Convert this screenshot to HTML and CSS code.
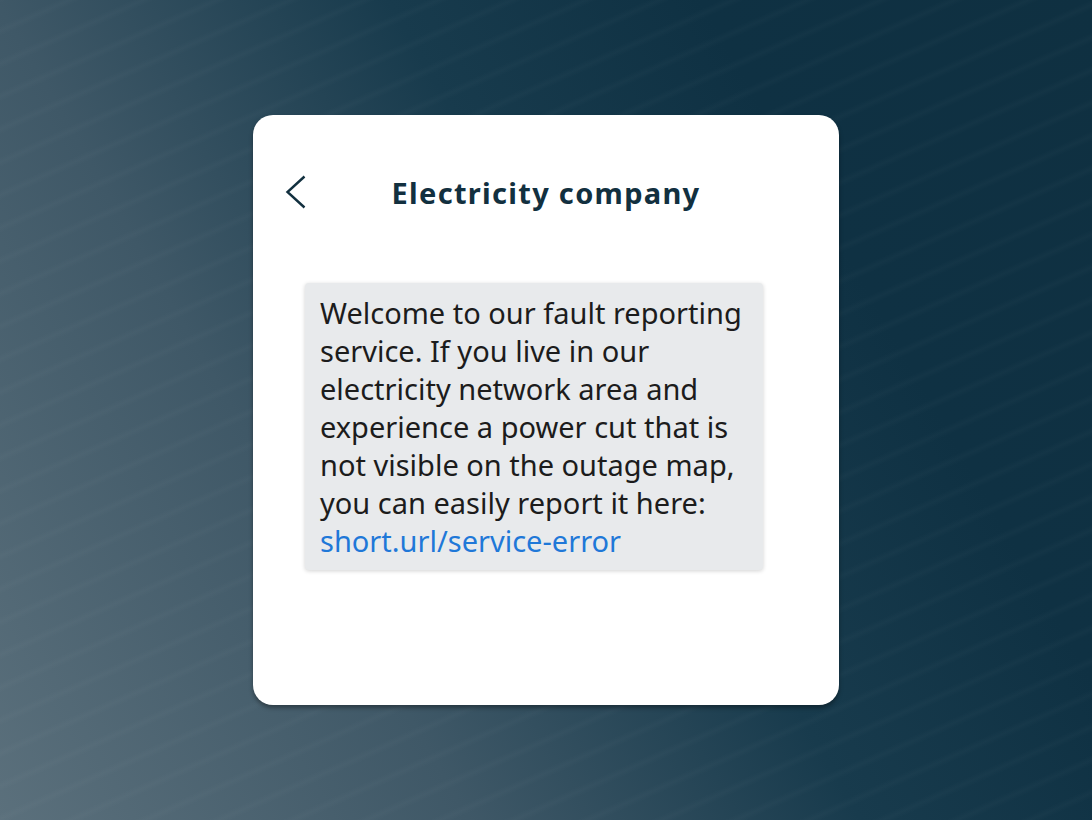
FILE: index.html
```html
<!DOCTYPE html>
<html lang="en">
<head>
<meta charset="utf-8">
<title>Electricity company</title>
<link rel="stylesheet" href="styles.css">
</head>
<body>
<main class="stage">
  <section class="card">
    <header class="card-header">
      <span class="back" aria-label="Back">
        <svg width="22" height="34" viewBox="0 0 22 34" fill="none"><polyline points="19.5,1.5 2.5,17 19.5,32.5" stroke="#12303f" stroke-width="2.4" stroke-linecap="butt" stroke-linejoin="miter"/></svg>
      </span>
      <h1 class="title">Electricity company</h1>
      <span class="spacer"></span>
    </header>
    <div class="thread">
      <p class="bubble">Welcome to our fault reporting service. If you live in our electricity network area and experience a power cut that is not visible on the outage map, you can easily report it here: <a class="link" href="#">short.url/service-error</a></p>
    </div>
  </section>
</main>
</body>
</html>
```
FILE: styles.css
```css
html, body {
  margin: 0;
  padding: 0;
}
body {
  width: 1092px;
  height: 820px;
  overflow: hidden;
  font-family: "Noto Sans", "Open Sans", sans-serif;
  background:
    repeating-linear-gradient(-24deg, rgba(255,255,255,0) 0px, rgba(255,255,255,0) 20px, rgba(255,255,255,0.02) 25px, rgba(255,255,255,0) 30px),
    linear-gradient(60deg, #5b707c 0%, #3f5867 30%, #183b4d 55%, #0f3143 75%, #0f3041 100%);
}
.stage {
  height: 820px;
  display: flex;
  align-items: center;
  justify-content: center;
}
.card {
  width: 586px;
  height: 590px;
  box-sizing: border-box;
  background: #fff;
  border-radius: 20px;
  box-shadow: 0 3px 4px rgba(0,0,0,0.35);
  padding: 58px 32px 0 32px;
  display: flex;
  flex-direction: column;
}
.card-header {
  height: 40px;
  display: flex;
  align-items: center;
  justify-content: space-between;
}
.back {
  width: 22px;
  height: 34px;
  display: flex;
  margin-top: -2px;
}
.spacer {
  width: 22px;
}
.title {
  margin: 0;
  font-family: "Noto Sans", "Open Sans", sans-serif;
  font-size: 29px;
  font-weight: 700;
  letter-spacing: 1.3px;
  color: #12303f;
  line-height: 40px;
}
.thread {
  padding: 70px 0 0 20px;
}
.bubble {
  margin: 0;
  width: 458px;
  box-sizing: border-box;
  padding: 11px 12px 10px 15px;
  background: #e8eaec;
  border-radius: 4px;
  box-shadow: 0 1px 4px rgba(0,0,0,0.18);
  font-size: 29px;
  line-height: 38px;
  color: #1c1c1c;
}
.link {
  color: #1f78d8;
  text-decoration: none;
}
```
